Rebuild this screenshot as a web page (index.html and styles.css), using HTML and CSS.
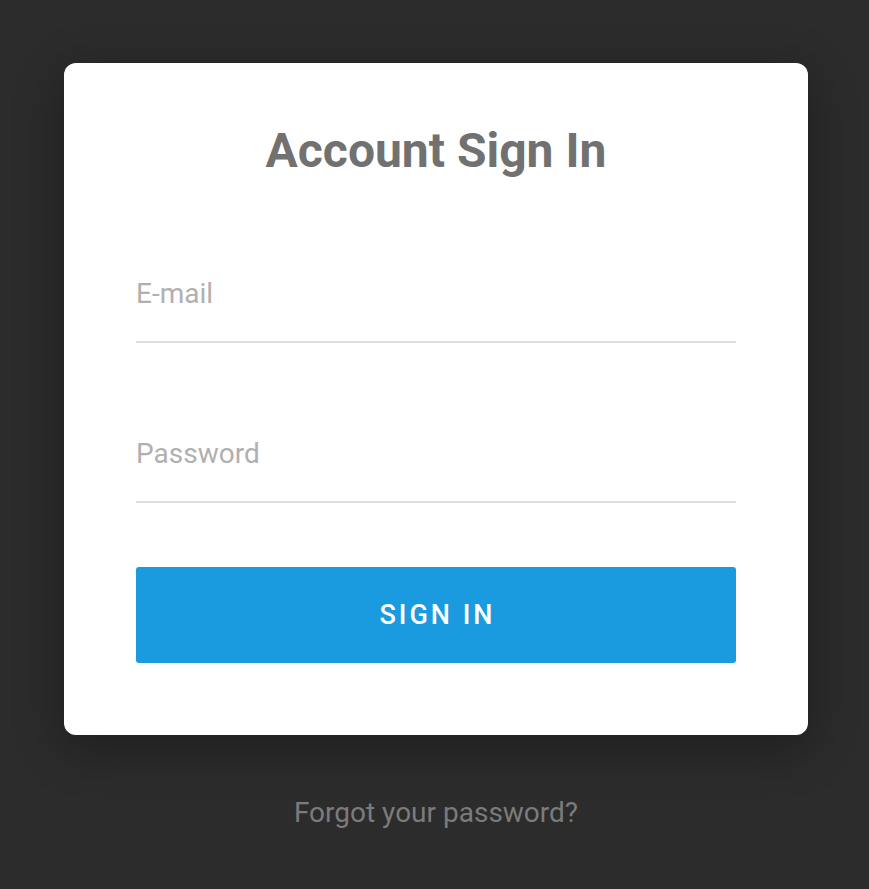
FILE: index.html
```html
<!DOCTYPE html>
<html lang="en">
<head>
<meta charset="utf-8">
<title>Account Sign In</title>
<link rel="stylesheet" href="styles.css">
</head>
<body>
<main class="wrap">
  <form class="card" onsubmit="return false">
    <h1 class="title">Account Sign In</h1>
    <input class="field" type="email" placeholder="E-mail">
    <input class="field field-pass" type="password" placeholder="Password">
    <button class="btn" type="submit">SIGN IN</button>
  </form>
  <a class="forgot" href="#">Forgot your password?</a>
</main>
</body>
</html>
```
FILE: styles.css
```css
html, body {
  margin: 0;
  padding: 0;
  background: #2c2c2c;
  font-family: Roboto, "Liberation Sans", sans-serif;
}
.wrap {
  width: 744px;
  margin: 63px 0 0 64px;
  display: flex;
  flex-direction: column;
}
.card {
  background: #fff;
  border-radius: 12px;
  padding: 60px 72px 72px;
  display: flex;
  flex-direction: column;
  box-shadow: 0 12px 48px rgba(0, 0, 0, 0.35);
}
.title {
  margin: 0 0 92px;
  font-size: 48px;
  line-height: 56px;
  font-weight: 700;
  color: #717171;
  text-align: center;
}
.field {
  box-sizing: border-box;
  height: 72px;
  padding: 0 0 25px;
  border: none;
  border-bottom: 2px solid #dedede;
  outline: none;
  font-family: inherit;
  font-size: 28px;
  color: #555;
  background: transparent;
}
.field::placeholder {
  color: #b0b0b0;
}
.field-pass {
  margin-top: 88px;
}
.btn {
  margin-top: 64px;
  height: 96px;
  border: none;
  border-radius: 3px;
  background: #1a9be0;
  color: #fff;
  font-family: inherit;
  font-size: 27px;
  font-weight: 500;
  letter-spacing: 3px;
  padding: 0 0 0 3px;
  cursor: pointer;
}
.forgot {
  margin-top: 62px;
  align-self: center;
  font-size: 28px;
  line-height: 32px;
  color: #7b7b7b;
  text-decoration: none;
}
```
